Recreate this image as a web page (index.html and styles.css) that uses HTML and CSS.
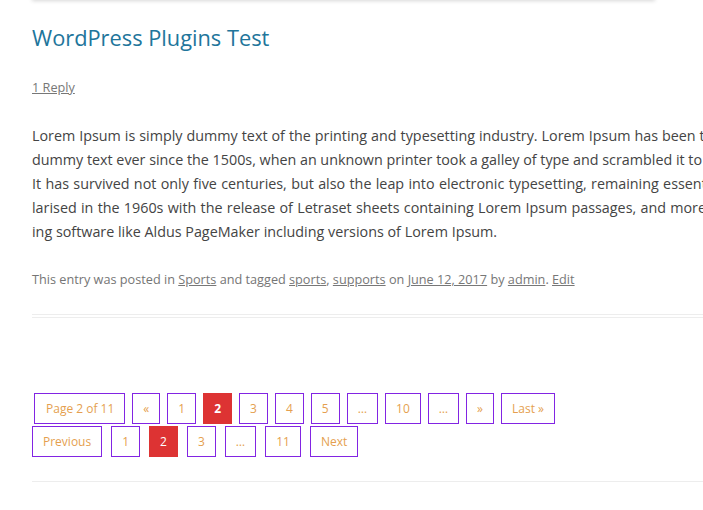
FILE: index.html
```html
<!DOCTYPE html>
<html lang="en">
<head>
<meta charset="utf-8">
<title>WordPress Plugins Test</title>
<link rel="stylesheet" href="styles.css">
</head>
<body>
<div class="top-shadow"></div>
<main class="site-content">
  <article class="post">
    <header class="entry-header">
      <h1 class="entry-title">WordPress Plugins Test</h1>
      <div class="comments-link"><a href="#">1 Reply</a></div>
    </header>
    <div class="entry-content">
      <p class="text">
        <span class="line l1">Lorem Ipsum is simply dummy text of the printing and typesetting industry. Lorem Ipsum has been the industry's standard</span>
        <span class="line l2">dummy text ever since the 1500s, when an unknown printer took a galley of type and scrambled it to make a type specimen book.</span>
        <span class="line l3">It has survived not only five centuries, but also the leap into electronic typesetting, remaining essentially unchanged. It was popu-</span>
        <span class="line l4">larised in the 1960s with the release of Letraset sheets containing Lorem Ipsum passages, and more recently with desktop publish-</span>
        <span class="line l5">ing software like Aldus PageMaker including versions of Lorem Ipsum.</span>
      </p>
    </div>
    <footer class="entry-meta">This entry was posted in <a href="#">Sports</a> and tagged <a href="#">sports</a>, <a href="#">supports</a> on <a href="#">June 12, 2017</a> by <a href="#">admin</a>. <a href="#">Edit</a></footer>
  </article>

  <nav class="pagenavi">
    <span class="pg pages">Page 2 of 11</span>
    <a class="pg" href="#">«</a>
    <a class="pg" href="#">1</a>
    <span class="pg current">2</span>
    <a class="pg" href="#">3</a>
    <a class="pg" href="#">4</a>
    <a class="pg" href="#">5</a>
    <span class="pg">…</span>
    <a class="pg" href="#">10</a>
    <span class="pg">…</span>
    <a class="pg" href="#">»</a>
    <a class="pg" href="#">Last »</a>
  </nav>

  <nav class="pagination">
    <a class="pg" href="#">Previous</a>
    <a class="pg" href="#">1</a>
    <span class="pg current">2</span>
    <a class="pg" href="#">3</a>
    <span class="pg">…</span>
    <a class="pg" href="#">11</a>
    <a class="pg" href="#">Next</a>
  </nav>

  <div class="bottom-rule"></div>
</main>
</body>
</html>
```

FILE: styles.css
```css
html, body {
  margin: 0;
  padding: 0;
  overflow: hidden;
  background: #ffffff;
}

body {
  font-family: "Open Sans", "Liberation Sans", sans-serif;
  color: #444444;
  font-size: 14px;
  line-height: 24px;
}

.top-shadow {
  width: 623px;
  height: 20px;
  margin: -20px 0 0 32px;
  background: #ffffff;
  box-shadow: 0 1px 4px rgba(0, 0, 0, 0.16);
}

.site-content {
  width: 1100px;
  padding-left: 32px;
}

.entry-title {
  margin: 23px 0 0;
  font-size: 21.8px;
  line-height: 30px;
  font-weight: 400;
  color: #21759b;
}

.comments-link {
  margin-top: 22px;
  font-size: 12.7px;
  line-height: 24px;
}

.comments-link a,
.entry-meta a {
  color: #777777;
  text-decoration: underline;
}

.entry-content .text {
  margin: 25px 0 0;
  font-size: 14.33px;
  line-height: 24px;
  color: #444444;
}

.line {
  display: block;
  white-space: nowrap;
}

.l1 { word-spacing: 0.25px; }
.l2 { word-spacing: -0.05px; }
.l3 { word-spacing: 0.6px; }
.l4 { word-spacing: 0.55px; }
.l5 { word-spacing: 0; }

.entry-meta {
  margin-top: 23px;
  font-size: 12.7px;
  line-height: 24px;
  color: #757575;
  padding-bottom: 23px;
  border-bottom: 4px double #ededed;
}

.pagenavi,
.pagination {
  display: flex;
  align-items: flex-start;
  font-size: 12px;
  line-height: 19px;
}

.pagenavi {
  margin: 75px 0 0 2px;
  gap: 7px;
}

.pagination {
  margin-top: 2px;
  gap: 9px;
}

.pg {
  display: block;
  padding: 5px 10px;
  border: 1px solid #8224e3;
  color: #e59f4f;
  text-decoration: none;
  white-space: nowrap;
}

.pg.pages {
  padding: 5px 10px 5px 11px;
}

.pg.current {
  background: #dd3333;
  border-color: #dd3333;
  color: #ffffff;
}

.pagenavi .current {
  font-weight: 700;
}

.bottom-rule {
  margin-top: 24px;
  border-top: 1px solid #ededed;
}
```
